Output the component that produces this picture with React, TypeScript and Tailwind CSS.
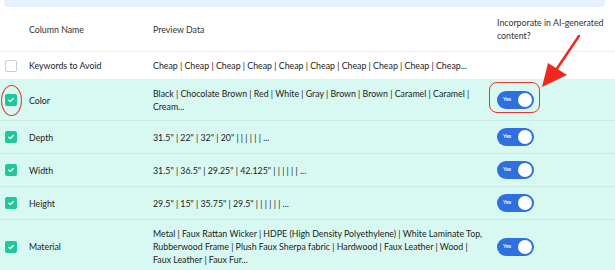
import React from "react";

type Row = { name: string; preview: string[]; checked: boolean; toggle: boolean };

const rows: Row[] = [
  { name: "Keywords to Avoid", preview: ["Cheap | Cheap | Cheap | Cheap | Cheap | Cheap | Cheap | Cheap | Cheap | Cheap..."], checked: false, toggle: false },
  { name: "Color", preview: ["Black | Chocolate Brown | Red | White | Gray | Brown | Brown | Caramel | Caramel |", "Cream..."], checked: true, toggle: true },
  { name: "Depth", preview: ["31.5\" | 22\" | 32\" | 20\" | | | | | | ..."], checked: true, toggle: true },
  { name: "Width", preview: ["31.5\" | 36.5\" | 29.25\" | 42.125\" | | | | | | ..."], checked: true, toggle: true },
  { name: "Height", preview: ["29.5\" | 15\" | 35.75\" | 29.5\" | | | | | | ..."], checked: true, toggle: true },
  {
    name: "Material",
    preview: [
      "Metal | Faux Rattan Wicker | HDPE (High Density Polyethylene) | White Laminate Top,",
      "Rubberwood Frame | Plush Faux Sherpa fabric | Hardwood | Faux Leather | Wood |",
      "Faux Leather | Faux Fur...",
    ],
    checked: true,
    toggle: true,
  },
];

function Checkbox({ checked }: { checked: boolean }) {
  if (!checked) {
    return <div className="w-[12px] h-[12px] rounded-[2px] border border-[#c9ced6] bg-white" />;
  }
  return (
    <div className="w-[12px] h-[12px] rounded-[2px] bg-[#1fc79a] flex items-center justify-center">
      <svg width="8" height="8" viewBox="0 0 10 10" fill="none">
        <path d="M2.2 5.2 L4.2 7 L7.8 3.2" stroke="white" strokeWidth="1.6" strokeLinecap="round" strokeLinejoin="round" />
      </svg>
    </div>
  );
}

function Toggle() {
  return (
    <div className="w-[37px] h-[18px] rounded-full bg-[#2f6fdf] flex items-center justify-between pl-[6px] pr-[2px]">
      <span className="text-[5.5px] leading-none text-white font-semibold">Yes</span>
      <div className="w-[14px] h-[14px] rounded-full bg-white" />
    </div>
  );
}

export default function App() {
  return (
    <div className="relative w-[615px] h-[270px] overflow-hidden bg-white text-[8.8px] leading-[13px] text-[#222]" style={{ fontFamily: "Lato, 'Noto Sans', sans-serif" }}>
      <div className="mx-[4px] w-[601px] h-[7px] bg-[#e5f1fd] rounded-b-[4px]" />
      <div className="grid grid-cols-[24px_124px_344px_1fr] pl-[5px] items-center h-[45px] border-b border-[#efefef] text-[#333]">
        <div />
        <div>Column Name</div>
        <div>Preview Data</div>
        <div className="whitespace-nowrap">
          Incorporate in AI-generated
          <br />
          content?
        </div>
      </div>
      {rows.map((r) => (
        <div
          key={r.name}
          className={
            "grid grid-cols-[24px_124px_344px_1fr] pl-[5px] items-center py-[7px] border-b " +
            (r.checked ? "bg-[#d7f9f1] border-[#cde8e2]" : "bg-white border-[#e4f2ef]")
          }
        >
          <div><Checkbox checked={r.checked} /></div>
          <div>{r.name}</div>
          <div className="flex flex-col whitespace-nowrap">
            {r.preview.map((l, i) => (
              <span key={i}>{l}</span>
            ))}
          </div>
          <div className="flex items-center">{r.toggle ? <Toggle /> : null}</div>
        </div>
      ))}
      {/* annotations */}
      <div className="absolute left-[1px] top-[85px] w-[21px] h-[31px] rounded-[50%] border-[1.5px] border-[#e8392f]" />
      <div className="absolute left-[489px] top-[82px] w-[51px] h-[31px] rounded-[8px] border-[1.5px] border-[#e8392f]" />
      <svg className="absolute left-0 top-0" width="615" height="270" viewBox="0 0 615 270">
        <line x1="579" y1="36" x2="556" y2="70" stroke="#f0291e" strokeWidth="2.5" strokeLinecap="round" />
        <polygon points="542,87 548,63 567,75" fill="#f0291e" />
      </svg>
    </div>
  );
}
